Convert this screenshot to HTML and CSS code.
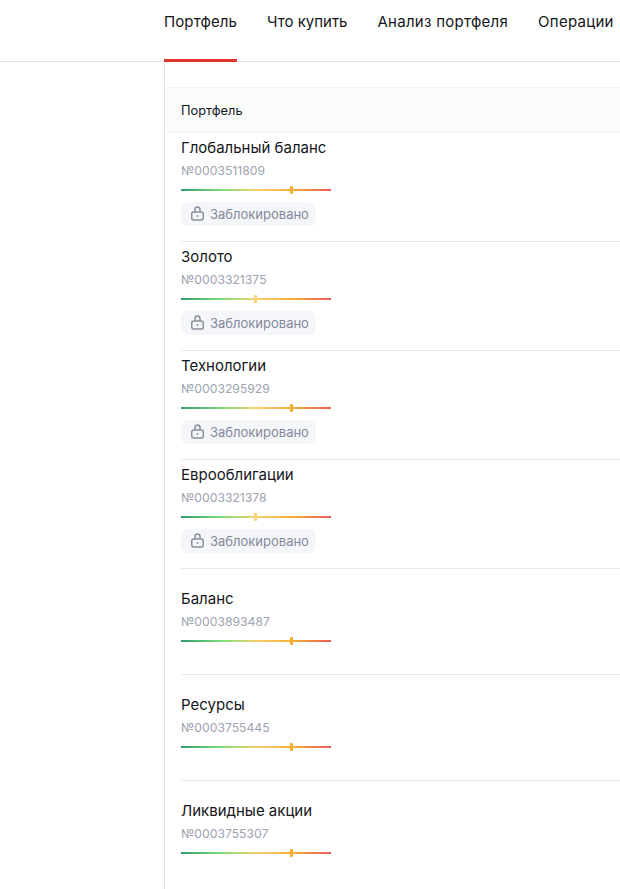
FILE: index.html
```html
<!DOCTYPE html>
<html lang="ru">
<head>
  <meta charset="UTF-8" />
  <title>Портфель</title>
  <link rel="stylesheet" href="styles.css">
</head>
<body>
  <nav class="tabs">
    <a class="tab active">Портфель</a>
    <a class="tab">Что купить</a>
    <a class="tab wide">Анализ портфеля</a>
    <a class="tab wide">Операции</a>
  </nav>
  <main class="content">
    <div class="table-head">Портфель</div>

    <section class="row locked">
      <div class="name">Глобальный баланс</div>
      <div class="number">№0003511809</div>
      <div class="risk"><span class="mark high"></span></div>
      <div class="badge">
        <svg class="lock" viewBox="0 0 13 15"><path d="M4 6V3.5a2.5 2.5 0 0 1 5 0V6"/><rect x="0.75" y="6" width="11.5" height="8" rx="2"/><circle cx="6.5" cy="10" r="1" class="dot"/></svg>
        Заблокировано
      </div>
    </section>

    <section class="row locked">
      <div class="name">Золото</div>
      <div class="number">№0003321375</div>
      <div class="risk"><span class="mark mid"></span></div>
      <div class="badge">
        <svg class="lock" viewBox="0 0 13 15"><path d="M4 6V3.5a2.5 2.5 0 0 1 5 0V6"/><rect x="0.75" y="6" width="11.5" height="8" rx="2"/><circle cx="6.5" cy="10" r="1" class="dot"/></svg>
        Заблокировано
      </div>
    </section>

    <section class="row locked">
      <div class="name">Технологии</div>
      <div class="number">№0003295929</div>
      <div class="risk"><span class="mark high"></span></div>
      <div class="badge">
        <svg class="lock" viewBox="0 0 13 15"><path d="M4 6V3.5a2.5 2.5 0 0 1 5 0V6"/><rect x="0.75" y="6" width="11.5" height="8" rx="2"/><circle cx="6.5" cy="10" r="1" class="dot"/></svg>
        Заблокировано
      </div>
    </section>

    <section class="row locked">
      <div class="name">Еврооблигации</div>
      <div class="number">№0003321378</div>
      <div class="risk"><span class="mark mid"></span></div>
      <div class="badge">
        <svg class="lock" viewBox="0 0 13 15"><path d="M4 6V3.5a2.5 2.5 0 0 1 5 0V6"/><rect x="0.75" y="6" width="11.5" height="8" rx="2"/><circle cx="6.5" cy="10" r="1" class="dot"/></svg>
        Заблокировано
      </div>
    </section>

    <section class="row">
      <div class="name">Баланс</div>
      <div class="number">№0003893487</div>
      <div class="risk"><span class="mark high"></span></div>
    </section>

    <section class="row">
      <div class="name">Ресурсы</div>
      <div class="number">№0003755445</div>
      <div class="risk"><span class="mark high"></span></div>
    </section>

    <section class="row last">
      <div class="name">Ликвидные акции</div>
      <div class="number">№0003755307</div>
      <div class="risk"><span class="mark high"></span></div>
    </section>
  </main>
</body>
</html>
```

FILE: styles.css
```css
html, body {
  height: 100%;
}

body {
  margin: 0;
  display: flex;
  flex-direction: column;
  overflow: hidden;
  background-color: white;
  color: #14161a;
  font-family: 'Inter', 'Noto Sans', sans-serif;
}

.tabs {
  display: flex;
  gap: 30px;
  height: 61px;
  padding-left: 164px;
  border-bottom: 1px solid #dfe1e6;
  white-space: nowrap;
}

.tab {
  height: 62px;
  box-sizing: border-box;
  padding-top: 13px;
  font-size: 15px;
  line-height: 18px;
}

.tab.wide {
  letter-spacing: 0.27px;
}

.tab.active {
  border-bottom: 3px solid #e2332a;
  letter-spacing: 0.1px;
}

.content {
  flex: 1;
  margin-left: 164px;
  padding-top: 25px;
  border-left: 1px solid #dfe1e6;
}

.table-head {
  height: 44px;
  padding-left: 16px;
  border-top: 1px solid #f3f5f7;
  border-bottom: 1px solid #f3f5f7;
  background-color: #fbfcfc;
  font-size: 12.8px;
  line-height: 45px;
}

.row {
  height: 106px;
  margin-left: 16px;
  padding-top: 21px;
  box-sizing: border-box;
  border-bottom: 1px solid #e8eaef;
}

.row.locked {
  height: 109px;
  padding-top: 6px;
}

.row.last {
  border-bottom: none;
}

.name {
  font-size: 15px;
  line-height: 18px;
}

.number {
  margin-top: 6px;
  color: #9ca3b0;
  font-size: 12.2px;
  line-height: 16px;
}

.risk {
  position: relative;
  width: 150px;
  height: 2px;
  margin-top: 10px;
  background: linear-gradient(to right, #2f9e6e, #7fdc7a 28%, #f8d06e 50%, #f5ae35 75%, #ea5a55);
}

.mark {
  position: absolute;
  top: -3px;
  width: 3px;
  height: 8px;
  border-radius: 1px;
}

.mark.high {
  left: 109px;
  background-color: #f5ae2d;
}

.mark.mid {
  left: 73px;
  background-color: #f9d27a;
}

.badge {
  display: inline-flex;
  align-items: center;
  gap: 6px;
  height: 24px;
  margin-top: 11px;
  padding: 0 7px 0 10px;
  border-radius: 7px;
  background-color: #f5f6fa;
  color: #84899a;
  font-size: 13px;
}

.lock {
  width: 13px;
  height: 15px;
  margin-top: -2px;
  fill: none;
  stroke: #8a8f9a;
  stroke-width: 1.5;
}

.lock .dot {
  fill: #8a8f9a;
  stroke: none;
}
```
